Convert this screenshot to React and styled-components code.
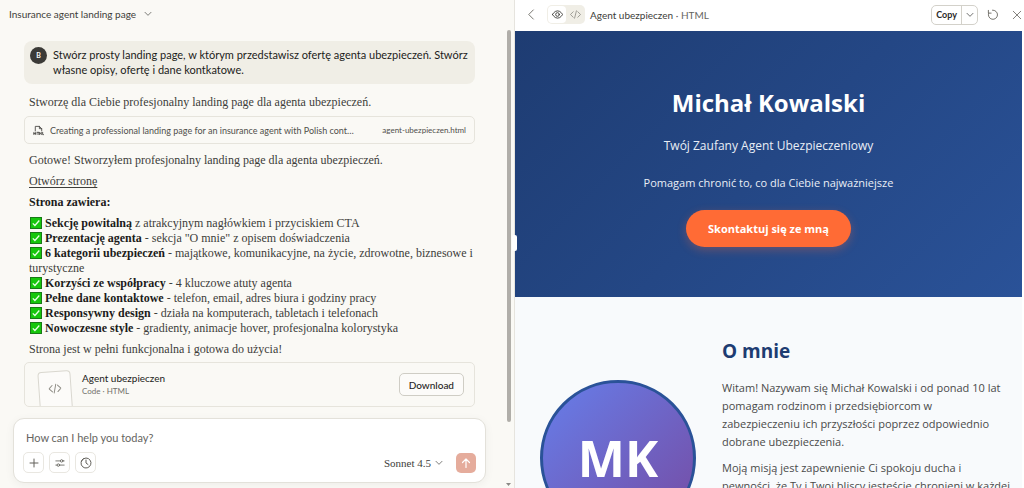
import React from "react";
import styled, { createGlobalStyle } from "styled-components";

const sans = `Lato, "Liberation Sans", sans-serif`;
const serif = `"Liberation Serif", "Times New Roman", serif`;
const site = `"Open Sans", "Noto Sans", sans-serif`;

const GlobalStyle = createGlobalStyle`
  * { box-sizing: border-box; }
  body { margin: 0; background: #faf9f5; font-family: ${sans}; color: #3d3d3a; }
  h1, h2, p, ul { margin: 0; padding: 0; }
  button, input, select { font-family: inherit; font-weight: inherit; color: inherit; margin: 0; }
`;

const Shell = styled.div`
  display: grid;
  grid-template-columns: minmax(0, 515fr) minmax(0, 509fr);
  height: 100vh;
  overflow: hidden;
`;

const ChatPane = styled.main`
  position: relative;
  display: flex;
  flex-direction: column;
  min-height: 0;
  border-right: 1px solid #e6e4de;
  background: #faf9f5;
`;

const ChatHeader = styled.header`
  display: flex;
  align-items: center;
  flex: none;
  height: 28px;
  padding: 0 9px;
`;

const TitleButton = styled.button`
  display: flex;
  align-items: center;
  gap: 8px;
  padding: 0;
  border: 0;
  background: none;
  font-size: 10px;
  line-height: 14px;
`;

const Thread = styled.div`
  display: flex;
  flex: 1;
  flex-direction: column;
  min-height: 0;
  overflow: hidden;
  padding: 13px 39px 0 24px;
`;

const UserMessage = styled.div`
  display: flex;
  flex: none;
  align-items: flex-start;
  gap: 6px;
  padding: 6px 4px 7px 6px;
  border-radius: 8px;
  background: #f0eee6;
  color: #1c1c1a;
  font-size: 11px;
  line-height: 15px;
`;

const Avatar = styled.span`
  display: grid;
  place-items: center;
  flex: none;
  width: 17px;
  height: 17px;
  border-radius: 50%;
  background: #3b3a37;
  color: #faf9f5;
  font-size: 7px;
  font-weight: 700;
`;

const Prose = styled.div`
  display: flex;
  flex: none;
  flex-direction: column;
  gap: 6px;
  padding: 0 0 0 5px;
  margin: ${(p) => p.$margin};
  color: #3d3d3a;
  font-family: ${serif};
  font-size: 12px;
  line-height: 15px;

  strong { color: #1c1c1a; }
  a { color: inherit; text-underline-offset: 2px; }
`;

const CheckList = styled.ul`
  list-style: none;
`;

const CheckIcon = styled.svg`
  width: 12px;
  height: 12px;
  margin: 0 3px 0 1px;
  vertical-align: -2px;
`;

const ToolCard = styled.button`
  display: flex;
  flex: none;
  align-items: center;
  gap: 6px;
  width: 100%;
  height: 28px;
  padding: 0 8px;
  border: 1px solid #e6e4dc;
  border-radius: 5px;
  background: none;
  color: #504f4b;
  font-size: 9px;
  text-align: left;
`;

const ToolLabel = styled.span`
  flex: 1;
  min-width: 0;
  white-space: nowrap;
`;

const ToolFile = styled.span`
  margin-left: 6px;
  font-size: 8px;
`;

const ArtifactCard = styled.div`
  display: flex;
  flex: none;
  gap: 10px;
  height: 45px;
  overflow: hidden;
  padding: 0 10px 0 14px;
  border: 1px solid #e6e4dc;
  border-radius: 5px;
`;

const PageThumb = styled.div`
  display: flex;
  justify-content: center;
  width: 33px;
  height: 50px;
  margin-top: 8px;
  padding-top: 10px;
  border: 1px solid #d9d7cf;
  border-radius: 4px;
  background: #fcfbf9;
  color: #8f8d86;
  transform: rotate(-4deg);
`;

const ArtifactText = styled.div`
  flex: 1;
  padding-top: 9px;
  font-size: 10px;
  line-height: 13px;
  color: #1c1c1a;

  small { display: block; color: #73726c; font-size: 8px; }
`;

const OutlineButton = styled.button`
  align-self: center;
  height: 23px;
  padding: 0 9px;
  border: 1px solid #cfcdc5;
  border-radius: 5px;
  background: #fcfbf9;
  color: #1f1e1d;
  font-size: 10px;
  font-weight: 500;
`;

const Composer = styled.form`
  display: flex;
  flex: none;
  flex-direction: column;
  justify-content: space-between;
  height: 65px;
  margin: 11px 28px 5px 13px;
  padding: 11px 9px 9px;
  border: 1px solid #e3e1da;
  border-radius: 11px;
  background: #fff;
  box-shadow: 0 2px 10px rgba(0, 0, 0, 0.05);
`;

const Prompt = styled.input`
  width: 100%;
  height: 15px;
  padding: 0 3px;
  border: 0;
  outline: 0;
  background: none;
  font-size: 11px;

  &::placeholder { color: #66655f; opacity: 1; }
`;

const ComposerRow = styled.div`
  display: flex;
  align-items: center;
  gap: 5px;
`;

const ToolButton = styled.button`
  display: grid;
  place-items: center;
  width: 21px;
  height: 21px;
  padding: 0;
  border: 1px solid #e9e7e1;
  border-radius: 5px;
  background: #fff;
  color: #63615b;
`;

const ModelButton = styled.button`
  display: flex;
  align-items: center;
  gap: 4px;
  margin-left: auto;
  padding: 0;
  border: 0;
  background: none;
  font-family: ${serif};
  font-size: 11px;
`;

const SendButton = styled.button`
  display: grid;
  place-items: center;
  width: 20px;
  height: 20px;
  margin-left: 8px;
  padding: 0;
  border: 0;
  border-radius: 5px;
  background: #e5ac9c;
  color: #fff;
`;

const ScrollRail = styled.div`
  position: absolute;
  top: 30px;
  right: 3px;
  bottom: 2px;
  display: flex;
  flex-direction: column;
  align-items: center;
  justify-content: space-between;
  width: 5px;
  color: #8b8985;
`;

const ScrollThumb = styled.span`
  width: 4px;
  height: 86%;
  border-radius: 2px;
  background: #b0aea9;
`;

const ResizeGrip = styled.span`
  position: absolute;
  z-index: 1;
  top: 235px;
  right: -3px;
  width: 5px;
  height: 16px;
  border-radius: 2px;
  background: #fff;
`;

const PreviewPane = styled.section`
  display: flex;
  flex-direction: column;
  min-height: 0;
  overflow: hidden;
  background: #fff;
`;

const PreviewBar = styled.header`
  display: flex;
  align-items: center;
  flex: none;
  height: 31px;
  padding: 0 1px 2px 10px;
`;

const IconButton = styled.button`
  display: grid;
  place-items: center;
  width: 12px;
  height: 14px;
  margin-left: ${(p) => p.$gap || "0"};
  padding: 0;
  border: 0;
  background: none;
  color: #6b6963;
`;

const ViewSwitch = styled.div`
  display: flex;
  height: 19px;
  margin: 0 5px 0 10px;
  padding: 1px;
  border-radius: 5px;
  background: #f0eee6;
`;

const ViewButton = styled.button`
  display: grid;
  place-items: center;
  width: 18px;
  height: 17px;
  padding: 0;
  border: 0;
  border-radius: 4px;
  background: ${(p) => (p.$active ? "#fff" : "none")};
  color: ${(p) => (p.$active ? "#3d3d3a" : "#8f8d86")};
`;

const FileName = styled.span`
  flex: 1;
  font-size: 10px;

  span { color: #66655f; }
`;

const SplitButton = styled.div`
  display: flex;
  height: 20px;
  border: 1px solid #d3d1ca;
  border-radius: 5px;

  button {
    display: grid;
    place-items: center;
    padding: 0 4px;
    border: 0;
    background: none;
    color: #2b2a28;
    font-size: 9px;
    font-weight: 700;
  }
  button + button { width: 16px; padding: 0; border-left: 1px solid #d3d1ca; }
`;

const Site = styled.article`
  flex: 1;
  min-height: 0;
  overflow: hidden;
  margin-right: 2px;
  background: #f8fafc;
  font-family: ${site};
`;

const Hero = styled.section`
  display: flex;
  flex-direction: column;
  align-items: center;
  height: 266px;
  padding-top: 54px;
  background: linear-gradient(135deg, #1e3c72 0%, #2a5298 100%);
  color: #fff;
  text-align: center;
`;

const HeroName = styled.h1`
  font-size: 24px;
  font-weight: 700;
  line-height: 36px;
`;

const HeroRole = styled.p`
  margin-top: 14px;
  font-size: 12px;
  line-height: 22px;
  color: #e9eef6;
`;

const HeroNote = styled.p`
  margin-top: 17px;
  font-size: 11px;
  line-height: 18px;
  color: #e9eef6;
`;

const CallToAction = styled.button`
  height: 37px;
  margin-top: 18px;
  padding: 0 22px;
  border: 0;
  border-radius: 19px;
  background: #ff6b35;
  box-shadow: 0 3px 10px rgba(255, 107, 53, 0.3);
  color: #fff;
  font-size: 11px;
  font-weight: 700;
`;

const About = styled.section`
  display: grid;
  grid-template-columns: 156px minmax(0, 1fr);
  gap: 26px;
  padding: 40px 10px 0 25px;
`;

const Portrait = styled.div`
  display: grid;
  place-items: center;
  width: 156px;
  height: 156px;
  margin-top: 43px;
  border: 3px solid #2a5298;
  border-radius: 50%;
  background: linear-gradient(135deg, #667eea 0%, #764ba2 100%);
  color: #fff;
  font-size: 50px;
  font-weight: 700;
  line-height: 64px;
`;

const AboutText = styled.div`
  color: #4a4a4a;
  font-size: 11px;
  line-height: 18px;

  h2 { margin-bottom: 14px; color: #1e3c72; font-size: 19px; line-height: 28px; }
  p { margin-bottom: 8px; }
`;

function Line({ size = 10, width = 2, children }) {
  return (
    <svg width={size} height={size} viewBox="0 0 24 24" fill="none" stroke="currentColor"
      strokeWidth={width} strokeLinecap="round" strokeLinejoin="round" aria-hidden="true">
      {children}
    </svg>
  );
}

const ChevronDown = ({ size = 9 }) => <Line size={size}><path d="M3 7l9 9 9-9" /></Line>;
const CodeMark = ({ size = 12 }) => (
  <Line size={size} width={1.8}><path d="M7 6l-6 6 6 6M17 6l6 6-6 6M14 4l-4 16" /></Line>
);

const features = [
  ["Sekcję powitalną", " z atrakcyjnym nagłówkiem i przyciskiem CTA"],
  ["Prezentację agenta", " - sekcja \"O mnie\" z opisem doświadczenia"],
  ["6 kategorii ubezpieczeń", " - majątkowe, komunikacyjne, na życie, zdrowotne, biznesowe i turystyczne"],
  ["Korzyści ze współpracy", " - 4 kluczowe atuty agenta"],
  ["Pełne dane kontaktowe", " - telefon, email, adres biura i godziny pracy"],
  ["Responsywny design", " - działa na komputerach, tabletach i telefonach"],
  ["Nowoczesne style", " - gradienty, animacje hover, profesjonalna kolorystyka"],
];

function Feature({ name, text }) {
  return (
    <li>
      <CheckIcon viewBox="0 0 12 12" aria-hidden="true">
        <rect x="0.5" y="0.5" width="11" height="11" fill="#16c60c" stroke="#187a16" />
        <path d="M2.8 6.4l2.1 2.1 4.4-5" fill="none" stroke="#e9ffe6" strokeWidth="1.3" />
      </CheckIcon>
      <strong>{name}</strong>{text}
    </li>
  );
}

function Chat() {
  return (
    <ChatPane>
      <ChatHeader>
        <TitleButton type="button">Insurance agent landing page <ChevronDown size={8} /></TitleButton>
      </ChatHeader>
      <Thread>
        <UserMessage>
          <Avatar>B</Avatar>
          <p>Stwórz prosty landing page, w którym przedstawisz ofertę agenta ubezpieczeń. Stwórz własne opisy, ofertę i dane kontkatowe.</p>
        </UserMessage>
        <Prose $margin="11px 0 6px">
          <p>Stworzę dla Ciebie profesjonalny landing page dla agenta ubezpieczeń.</p>
        </Prose>
        <ToolCard type="button">
          <Line size={11} width={2}>
            <path d="M5 13V3h9l5 5v5M14 3v5h5M2 16v5M2 18.500h4M6 16v5M9 16h4M11 16v5M14 21v-5l2 3 2-3v5M21 16v5h2" />
          </Line>
          <ToolLabel>Creating a professional landing page for an insurance agent with Polish cont…</ToolLabel>
          <ToolFile>agent-ubezpieczen.html</ToolFile>
        </ToolCard>
        <Prose $margin="9px 0 5px">
          <p>Gotowe! Stworzyłem profesjonalny landing page dla agenta ubezpieczeń.</p>
          <p><a href="#strona">Otwórz stronę</a></p>
          <p><strong>Strona zawiera:</strong></p>
          <CheckList>
            {features.map(([name, text]) => <Feature key={name} name={name} text={text} />)}
          </CheckList>
          <p>Strona jest w pełni funkcjonalna i gotowa do użycia!</p>
        </Prose>
        <ArtifactCard>
          <PageThumb><CodeMark size={13} /></PageThumb>
          <ArtifactText>Agent ubezpieczen<small>Code · HTML</small></ArtifactText>
          <OutlineButton type="button">Download</OutlineButton>
        </ArtifactCard>
      </Thread>
      <Composer onSubmit={(e) => e.preventDefault()}>
        <Prompt aria-label="Message" placeholder="How can I help you today?" />
        <ComposerRow>
          <ToolButton type="button" aria-label="Add"><Line size={12}><path d="M12 4v16M4 12h16" /></Line></ToolButton>
          <ToolButton type="button" aria-label="Tools">
            <Line size={10}><path d="M2 7h11M19 7h3M2 17h3M11 17h11" /><circle cx="16" cy="7" r="3" /><circle cx="8" cy="17" r="3" /></Line>
          </ToolButton>
          <ToolButton type="button" aria-label="History">
            <Line size={12}><path d="M7 3.300A10 10 0 1 0 12 2a10 10 0 0 0-9 6M12 6v6l4 3" /></Line>
          </ToolButton>
          <ModelButton type="button">Sonnet 4.5 <ChevronDown size={8} /></ModelButton>
          <SendButton type="submit" aria-label="Send"><Line size={12} width={2.4}><path d="M12 21V4M5 11l7-7 7 7" /></Line></SendButton>
        </ComposerRow>
      </Composer>
      <ScrollRail aria-hidden="true">
        <ScrollThumb />
        <svg width="5" height="3" viewBox="0 0 5 3"><path d="M0 0h5L2.500 3z" fill="currentColor" /></svg>
      </ScrollRail>
      <ResizeGrip />
    </ChatPane>
  );
}

function Preview() {
  return (
    <PreviewPane>
      <PreviewBar>
        <IconButton type="button" aria-label="Back"><Line size={11}><path d="M16 2L6 12l10 10" /></Line></IconButton>
        <ViewSwitch>
          <ViewButton type="button" aria-label="Preview" $active>
            <Line size={11}><path d="M1 12s4-8 11-8 11 8 11 8-4 8-11 8S1 12 1 12z" /><circle cx="12" cy="12" r="4" /></Line>
          </ViewButton>
          <ViewButton type="button" aria-label="Code"><CodeMark size={11} /></ViewButton>
        </ViewSwitch>
        <FileName>Agent ubezpieczen <span>· HTML</span></FileName>
        <SplitButton>
          <button type="button">Copy</button>
          <button type="button" aria-label="Copy options"><ChevronDown size={8} /></button>
        </SplitButton>
        <IconButton type="button" aria-label="Reload" $gap="8px">
          <Line size={11}><path d="M3 3v6h6M3.500 9A10 10 0 1 0 12 2.500" /></Line>
        </IconButton>
        <IconButton type="button" aria-label="Close" $gap="13px"><Line size={10}><path d="M3 3l18 18M21 3L3 21" /></Line></IconButton>
      </PreviewBar>
      <Site id="strona">
        <Hero>
          <HeroName>Michał Kowalski</HeroName>
          <HeroRole>Twój Zaufany Agent Ubezpieczeniowy</HeroRole>
          <HeroNote>Pomagam chronić to, co dla Ciebie najważniejsze</HeroNote>
          <CallToAction type="button">Skontaktuj się ze mną</CallToAction>
        </Hero>
        <About>
          <Portrait>MK</Portrait>
          <AboutText>
            <h2>O mnie</h2>
            <p>Witam! Nazywam się Michał Kowalski i od ponad 10 lat pomagam rodzinom i przedsiębiorcom w zabezpieczeniu ich przyszłości poprzez odpowiednio dobrane ubezpieczenia.</p>
            <p>Moją misją jest zapewnienie Ci spokoju ducha i pewności, że Ty i Twoi bliscy jesteście chronieni w każdej sytuacji.</p>
          </AboutText>
        </About>
      </Site>
    </PreviewPane>
  );
}

export default function App() {
  return (
    <>
      <GlobalStyle />
      <Shell>
        <Chat />
        <Preview />
      </Shell>
    </>
  );
}
